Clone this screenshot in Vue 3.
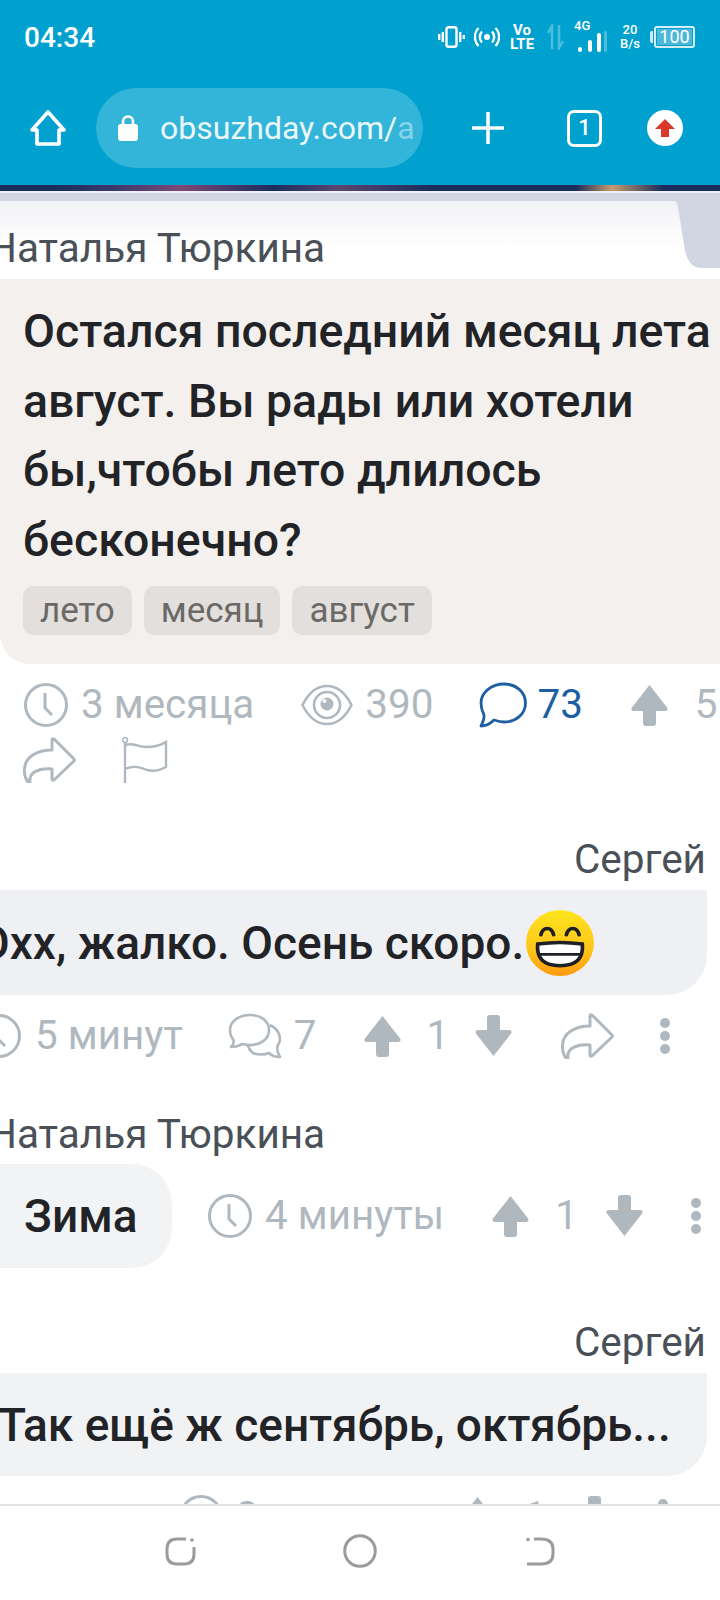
<script setup>
</script>

<template>
  <div class="page">
    <svg class="defs" width="0" height="0">
      <symbol id="clock" viewBox="0 0 46 46"><circle cx="23" cy="23" r="20.5" fill="none" stroke="currentColor" stroke-width="3"/><path d="M22 11V26L29 33" fill="none" stroke="currentColor" stroke-width="3"/></symbol>
      <symbol id="up" viewBox="0 0 37 42"><path d="M18.5 1L36.5 24Q37 27 34 27H25V39Q25 42 22 42H15Q12 42 12 39V27H3Q0 27 .5 24Z" fill="currentColor"/></symbol>
      <symbol id="share" viewBox="0 0 53 46"><path d="M31 2L51 22Q52 23 51 24L31 43Q29 44 29 42V32Q17 31 10 36Q6 40 7 45Q6 46 5 45Q1 40 1.500 32C2 20 14 13 29 13V3Q29 1 31 2Z" fill="none" stroke="currentColor" stroke-width="3" stroke-linejoin="round"/></symbol>
      <symbol id="dots" viewBox="0 0 12 38"><circle cx="6" cy="6" r="5" fill="currentColor"/><circle cx="6" cy="19" r="5" fill="currentColor"/><circle cx="6" cy="32" r="5" fill="currentColor"/></symbol>
    </svg>

    <header class="top">
      <div class="status">
        <span class="time">04:34</span>
        <div class="sicons">
          <svg class="s-vib" viewBox="0 0 27 22" width="27" height="22"><rect x="8.500" y="1.200" width="10" height="19.600" rx="2" fill="none" stroke="#fff" stroke-width="2.400"/><path d="M1.200 8v6M4.800 6v10M22.200 6v10M25.800 9v4" stroke="#fff" stroke-width="2.400" fill="none"/></svg>
          <svg class="s-hot" viewBox="0 0 26 22" width="26" height="22"><circle cx="13" cy="11" r="3" fill="#fff"/><path d="M8 5.500a8 8 0 0 0 0 11M18 5.500a8 8 0 0 1 0 11M4.500 2a13 13 0 0 0 0 18M21.500 2a13 13 0 0 1 0 18" stroke="#fff" stroke-width="2.400" fill="none"/></svg>
          <div class="volte"><span>Vo</span><span>LTE</span></div>
          <svg class="s-arr" viewBox="0 0 18 26" width="18" height="26"><path d="M5 25V2L1 9M12 1V24L16 17" stroke="#fff" stroke-opacity=".3" stroke-width="2.500" fill="none"/></svg>
          <div class="net">
            <span class="g4">4G</span>
            <svg viewBox="0 0 30 22" width="30" height="22"><rect x="1" y="16" width="4" height="5" rx="2" fill="#fff"/><rect x="11" y="9" width="4" height="12" rx="2" fill="#fff"/><rect x="20" y="2" width="4" height="19" rx="2" fill="#fff"/><rect x="27" y="0" width="3" height="21" rx="1.500" fill="#fff" fill-opacity=".3"/></svg>
          </div>
          <div class="speed"><span>20</span><span>B/s</span></div>
          <div class="batt"><i class="cap"></i><div class="cell"><span>100</span></div></div>
        </div>
      </div>
      <div class="toolbar">
        <svg class="home" viewBox="0 0 36 36" width="36" height="36"><path d="M18 2L34 20H29V34H7V20H2Z" fill="none" stroke="#fff" stroke-width="3.600" stroke-linejoin="round"/></svg>
        <div class="url">
          <svg viewBox="0 0 20 26" width="20" height="26"><rect x="0" y="9" width="20" height="17" rx="3" fill="#fff"/><path d="M5 10V6.500a5 5 0 0 1 10 0V10" fill="none" stroke="#fff" stroke-width="2.500"/></svg>
          <span class="addr">obsuzhday.com/<em>a</em></span>
        </div>
        <svg class="plus" viewBox="0 0 32 32" width="32" height="32"><path d="M16 0V32M0 16H32" stroke="#fff" stroke-width="3.500" fill="none"/></svg>
        <div class="tab">1</div>
        <div class="upl"><svg viewBox="0 0 20 18" width="20" height="18"><path d="M10 0L20 10H14V18H6V10H0Z" fill="#d9382b"/></svg></div>
      </div>
    </header>

    <div class="strip"></div>

    <div class="greyband">
      <svg class="corner" viewBox="0 0 48 75" width="48" height="75"><path d="M0 0H48V75H30C18 75 14 65 12 52L6 14C5 9 3 7 0 7Z" fill="#d2d6e2"/></svg>
      <div class="card">
        <div class="name qname">Наталья Тюркина</div>
      </div>
    </div>

    <section class="qbubble">
      <h1 class="qtext">Остался последний месяц лета август. Вы рады или хотели бы,чтобы лето длилось бесконечно?</h1>
      <div class="tags"><span>лето</span><span>месяц</span><span>август</span></div>
    </section>

    <div class="meta m1">
      <svg class="i-clock"><use href="#clock"/></svg>
      <span class="mt t-age">3 месяца</span>
      <svg class="i-eye" viewBox="0 0 52 44"><path d="M1.500 22C8 9 17 3 26 3S44 9 50.500 22C44 35 35 41 26 41S8 35 1.500 22Z" fill="none" stroke="currentColor" stroke-width="2.600"/><circle cx="26" cy="22" r="13" fill="none" stroke="currentColor" stroke-width="2.600"/><circle cx="26" cy="21" r="6.500" fill="currentColor"/><circle cx="23.500" cy="18" r="2" fill="#fff"/></svg>
      <span class="mt t-views">390</span>
      <svg class="i-com" viewBox="0 0 48 46"><path d="M25 2C37 2 46.500 10 46.500 21S37 40 25 40C21 40 18 39 15 38C11 42 7 44 2 44C4 40 5.500 37 5 33C3 29 2 25 2 21C2 10 13 2 25 2Z" fill="none" stroke="#1d5fa3" stroke-width="2.800" stroke-linejoin="round"/></svg>
      <span class="mt t-blue">73</span>
      <svg class="i-up u1"><use href="#up"/></svg>
      <span class="mt t-five">5</span>
    </div>
    <div class="meta m1b">
      <svg class="i-share"><use href="#share"/></svg>
      <svg class="i-flag" viewBox="0 0 46 46"><path d="M3 6V46M3 8C12 5 15 10 24 10C32 10 38 9 44 5V30C38 33 34 35 25 33C15 29 10 29 3 32" fill="none" stroke="currentColor" stroke-width="2.400"/><circle cx="3" cy="3" r="2.500" fill="none" stroke="currentColor" stroke-width="1.500"/></svg>
    </div>

    <div class="name right n2">Сергей</div>
    <section class="abubble b2">
      <span class="atext t2">Охх, жалко. Осень скоро.</span>
      <svg class="emoji" viewBox="0 0 64 64" width="68" height="66" preserveAspectRatio="none">
        <defs><linearGradient id="ey" x1="0" y1="0" x2="0" y2="1"><stop offset="0" stop-color="#ffe51c"/><stop offset=".6" stop-color="#ffc51a"/><stop offset="1" stop-color="#ff9a0c"/></linearGradient></defs>
        <circle cx="32" cy="32" r="32" fill="url(#ey)"/>
        <path d="M14 24C16 16 24 16 26 24M38 24C40 16 48 16 50 24" fill="none" stroke="#1d2026" stroke-width="3.500" stroke-linecap="round"/>
        <path d="M11 33Q32 30 53 33Q55 54 32 54Q9 54 11 33Z" fill="#fff" stroke="#1d2026" stroke-width="3.500"/>
        <path d="M11 43H53" stroke="#1d2026" stroke-width="2.500"/>
      </svg>
    </section>
    <div class="meta m2">
      <svg class="i-clock c2"><use href="#clock"/></svg>
      <span class="mt t-5m">5 минут</span>
      <svg class="i-coms" viewBox="0 0 54 46"><path d="M22 2C33 2 41 8 41 17S33 32 22 32C19 32 16 31.500 14 31C11 33 7 34 3 34C5 32 6 29 5.500 27C3 24 2 21 2 17C2 8 11 2 22 2ZM42 12C48 15 52 20 52 26C52 29 51 31 49.500 33C49 36 50 41 52 44C48 44 44 43 41 40C36 42 29 42 25 40C22 38 21 36 20 33" fill="none" stroke="currentColor" stroke-width="2.600" stroke-linejoin="round"/></svg>
      <span class="mt t-7">7</span>
      <svg class="i-up u2"><use href="#up"/></svg>
      <span class="mt t-1">1</span>
      <svg class="i-up down d2"><use href="#up"/></svg>
      <svg class="i-share s2"><use href="#share"/></svg>
      <svg class="i-dots dt2"><use href="#dots"/></svg>
    </div>

    <div class="name n3">Наталья Тюркина</div>
    <div class="r3">
      <section class="abubble b3"><span class="atext">Зима</span></section>
      <div class="meta m3">
        <svg class="i-clock"><use href="#clock"/></svg>
        <span class="mt t-4m">4 минуты</span>
        <svg class="i-up u3"><use href="#up"/></svg>
        <span class="mt t-1">1</span>
        <svg class="i-up down d3"><use href="#up"/></svg>
        <svg class="i-dots dt3"><use href="#dots"/></svg>
      </div>
    </div>

    <div class="name right n4">Сергей</div>
    <section class="abubble b4"><span class="atext t4">Так ещё ж сентябрь, октябрь...</span></section>
    <div class="meta m4">
      <svg class="i-clock"><use href="#clock"/></svg>
      <span class="mt t-3h">3</span>
      <svg class="i-up u4"><use href="#up"/></svg>
      <span class="mt t-14">1</span>
      <svg class="i-up down d4"><use href="#up"/></svg>
      <svg class="i-dots dt4"><use href="#dots"/></svg>
    </div>

    <nav class="nav">
      <svg viewBox="0 0 31 30" width="31" height="30"><path d="M21 3H12Q2 3 2 13V18Q2 28 12 28H19Q29 28 29 18V11" fill="none" stroke="#9b9b9b" stroke-width="3"/><circle cx="27" cy="4" r="1.800" fill="#9b9b9b"/></svg>
      <svg viewBox="0 0 34 34" width="34" height="34"><circle cx="17" cy="17" r="15.300" fill="none" stroke="#9b9b9b" stroke-width="3"/></svg>
      <svg viewBox="0 0 29 30" width="29" height="30"><path d="M8 3H15Q27 3 27 13V18Q27 28 15 28H1" fill="none" stroke="#9b9b9b" stroke-width="3"/><circle cx="2" cy="3.500" r="1.800" fill="#9b9b9b"/></svg>
    </nav>
  </div>
</template>

<style>
html, body { margin: 0; background: #fff; }
</style>

<style scoped>
.page { position: relative; width: 720px; height: 1600px; overflow: hidden; background: #fff; font-family: Roboto, sans-serif; display: flex; flex-direction: column; }
.defs { position: absolute; }
.top { height: 185px; background: #00a1cf; color: #fff; flex: none; box-sizing: border-box; }
.status { height: 74px; display: flex; align-items: center; justify-content: space-between; padding: 0 25px 0 24px; }
.time { font-size: 28px; font-weight: 500; }
.sicons { display: flex; align-items: center; }
.s-vib { margin-right: 1px; }
.s-hot { margin-left: 8px; }
.volte { margin-left: 9px; width: 26px; display: flex; flex-direction: column; align-items: center; font-size: 15px; line-height: 14px; font-weight: 700; }
.s-arr { margin-left: 12px; }
.net { margin-left: 9px; width: 32px; height: 28px; position: relative; }
.net svg { position: absolute; left: 3px; bottom: -2px; }
.g4 { position: absolute; left: 0; top: -3px; font-size: 13px; line-height: 12px; font-weight: 500; }
.speed { margin-left: 12px; width: 24px; display: flex; flex-direction: column; align-items: center; font-size: 13px; line-height: 14px; font-weight: 500; }
.batt { margin-left: 8px; display: flex; align-items: center; }
.cap { display: block; width: 3px; height: 12px; background: #cfeaf4; border-radius: 2px 0 0 2px; margin-right: 1px; }
.cell { width: 41px; height: 22px; box-sizing: border-box; border: 2px solid #d4eef7; border-radius: 3px; padding: 1px; display: flex; }
.cell span { flex: 1; background: #4db8da; font-size: 18px; line-height: 16px; text-align: center; }
.toolbar { height: 80px; margin-top: 14px; display: flex; align-items: center; padding-left: 30px; }
.url { width: 327px; height: 80px; margin-left: 30px; border-radius: 40px; background: #33b4d9; display: flex; align-items: center; padding-left: 22px; box-sizing: border-box; overflow: hidden; flex: none; }
.addr { margin-left: 22px; font-size: 32px; white-space: nowrap; color: #eaf7fb; }
.addr em { font-style: normal; opacity: .45; }
.plus { margin-left: 49px; }
.tab { margin-left: 63px; width: 35px; height: 37px; box-sizing: border-box; border: 3.500px solid #fff; border-radius: 7px; font-size: 22px; font-weight: 500; line-height: 30px; text-align: center; }
.upl { margin-left: 45px; width: 36px; height: 36px; border-radius: 50%; background: #fff; display: flex; align-items: center; justify-content: center; }
.strip { height: 6px; flex: none; background: linear-gradient(90deg, #1a2d5c 0 8%, #3b3a6c 16%, #7a4a78 25%, #1a2d5c 38%, #5a4770 47%, #1a2d5c 60%, #1a2d5c 80%, #c79a70 85%, #1a2d5c 92%); }
.greyband { height: 88px; flex: none; background: #fff; position: relative; border-top: 2px solid #eceef3; box-sizing: border-box; }
.greyband::before { content: ""; position: absolute; left: 0; right: 0; top: 0; height: 8px; background: #d2d6e2; }
.corner { position: absolute; right: 0; top: 0; z-index: 2; }
.card { position: absolute; left: 0; top: 8px; right: 0; height: 78px; background: linear-gradient(#f1f2f5, #fff 60%); z-index: 1; }
.name { font-size: 40.500px; line-height: 46px; color: #4a5058; white-space: nowrap; flex: none; }
.qname { margin: 24px 0 0 -12px; }
.qbubble { flex: none; height: 385px; background: #f3f0ed; border-bottom-left-radius: 30px; box-sizing: border-box; padding: 18px 0 0 23px; margin-right: -40px; }
.qtext { margin: 0; width: 702px; font-size: 46.400px; line-height: 69.500px; font-weight: 500; color: #212327; }
.tags { display: flex; gap: 12px; margin-top: 11px; }
.tags span { height: 49px; padding: 0 17px; border-radius: 10px; background: #e2dfdc; color: #6b6966; font-size: 35px; line-height: 49px; }
.meta { display: flex; align-items: center; flex: none; color: #b0b8bf; }
.mt { font-size: 40.400px; line-height: 46px; white-space: nowrap; }
.i-clock { width: 46px; height: 46px; flex: none; }
.i-up { width: 37px; height: 42px; flex: none; }
.down { transform: scaleY(-1); }
.i-share { width: 53px; height: 46px; flex: none; }
.i-dots { width: 12px; height: 38px; flex: none; }
.m1 { margin-top: 18px; padding-left: 23px; height: 46px; }
.t-age { margin-left: 12px; }
.i-eye { width: 52px; height: 44px; margin-left: 47px; flex: none; }
.t-views { margin-left: 12px; }
.i-com { width: 48px; height: 46px; margin-left: 46px; flex: none; }
.t-blue { margin-left: 10px; color: #1d5fa3; }
.u1 { margin-left: 48px; }
.t-five { margin-left: 27px; }
.m1b { margin-top: 9px; padding-left: 23px; height: 46px; }
.i-flag { width: 46px; height: 46px; margin-left: 46px; flex: none; }
.right { text-align: right; padding-right: 14px; }
.n2 { margin-top: 53px; }
.abubble { display: flex; align-items: center; background: #eff0f4; box-sizing: border-box; flex: none; }
.atext { font-size: 46px; font-weight: 500; color: #212327; white-space: nowrap; }
.b2 { margin-top: 8px; width: 707px; height: 105px; border-bottom-right-radius: 40px; padding-left: 0; }
.t2 { margin-left: -22px; }
.emoji { margin-left: 2px; flex: none; }
.m2 { margin-top: 18px; height: 46px; padding-left: 0; }
.c2 { margin-left: -24px; }
.t-5m { margin-left: 13px; }
.i-coms { width: 54px; height: 46px; margin-left: 45px; flex: none; }
.t-7 { margin-left: 12px; }
.u2 { margin-left: 47px; }
.t-1 { margin-left: 26px; }
.d2 { margin-left: 26px; }
.s2 { margin-left: 49px; }
.dt2 { margin-left: 45px; }
.n3 { margin-top: 52px; margin-left: -12px; }
.r3 { display: flex; align-items: center; margin-top: 7px; flex: none; }
.b3 { width: 172px; height: 104px; background: #f2f3f5; border-radius: 0 40px 40px 0; padding-left: 24px; }
.m3 { margin-left: 35px; }
.t-4m { margin-left: 12px; }
.u3 { margin-left: 48px; }
.d3 { margin-left: 28px; }
.dt3 { margin-left: 47px; }
.n4 { margin-top: 51px; }
.b4 { margin-top: 8px; width: 707px; height: 103px; background: #f1f2f4; border-bottom-right-radius: 40px; }
.t4 { margin-left: -2px; }
.m4 { margin-top: 18px; padding-left: 178px; }
.t-3h { margin-left: 12px; }
.u4 { margin-left: 200px; }
.t-14 { margin-left: 28px; }
.d4 { margin-left: 30px; }
.dt4 { margin-left: 44px; }
.nav { position: absolute; left: 0; right: 0; bottom: 0; height: 96px; background: #fff; border-top: 2px solid #e0e2e5; box-sizing: border-box; padding-bottom: 4px; display: flex; align-items: center; z-index: 3; }
.nav svg:nth-child(1) { margin-left: 165px; }
.nav svg:nth-child(2) { margin-left: 147px; }
.nav svg:nth-child(3) { margin-left: 149px; }
</style>
